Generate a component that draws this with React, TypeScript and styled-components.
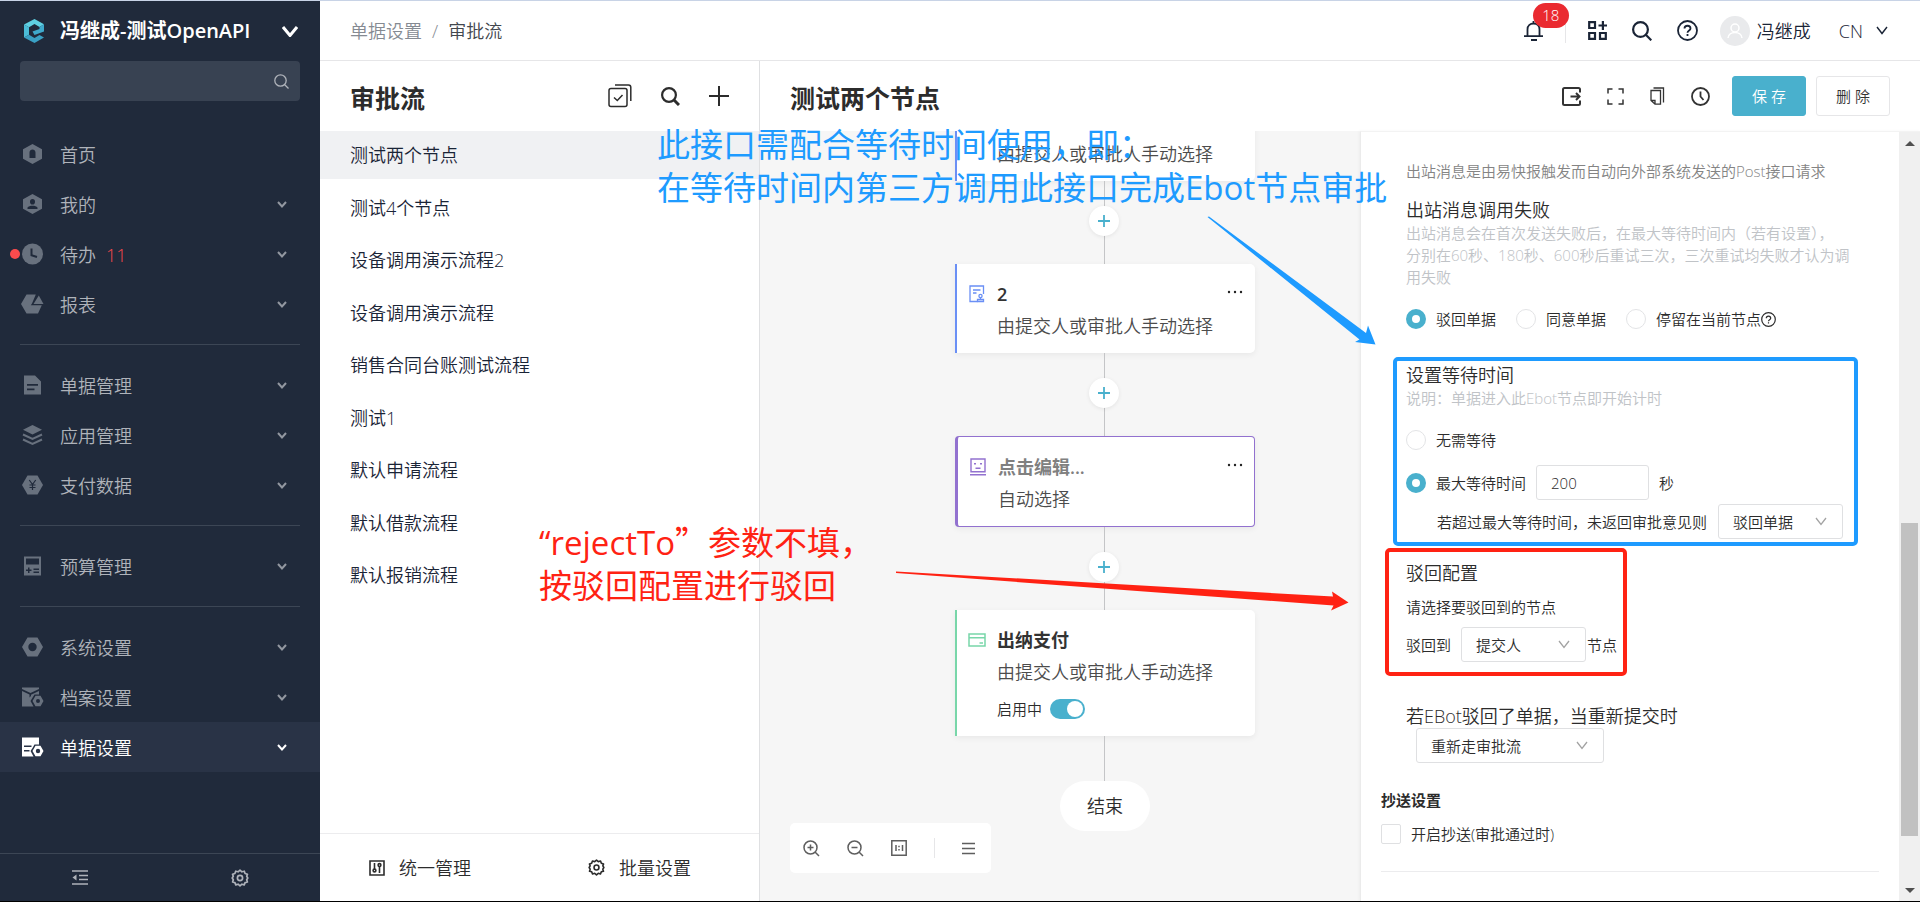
import React from "react";
import styled, { createGlobalStyle, css } from "styled-components";

const Global = createGlobalStyle`
  *, *::before, *::after { box-sizing: border-box; }
  body {
    margin: 0;
    font-family: "Open Sans", "Noto Sans CJK SC", sans-serif;
    font-size: 15px;
    font-weight: 350;
    line-height: 22px;
    color: #2c2c2c;
    background: #fff;
  }
  h1, h2, h3, p, ul { margin: 0; padding: 0; }
  ul { list-style: none; }
  a { color: inherit; text-decoration: none; }
  button, input, select { font: inherit; color: inherit; }
  svg { display: block; flex: none; }
`;

const teal = "#49b0cd";
const ink = "#1a2436";
const line = "#e6e6e8";

/* ---------- shell ---------- */

const Shell = styled.div`
  position: relative;
  display: grid;
  grid-template-columns: 320px minmax(0, 1fr);
  height: 100vh;
  overflow: hidden;
  border-top: 1px solid #c8d3e6;
  border-bottom: 1px solid #000;
`;

const IconButton = styled.button`
  display: flex;
  align-items: center;
  justify-content: center;
  padding: 0;
  border: 0;
  background: none;
  cursor: pointer;
`;

/* ---------- sidebar ---------- */

const Sidebar = styled.aside`
  display: flex;
  flex-direction: column;
  min-height: 0;
  background: #202a3b;
  color: #afb3ba;
`;

const Brand = styled.button`
  display: flex;
  align-items: center;
  height: 60px;
  padding: 0 22px 0 23px;
  border: 0;
  background: none;
  color: #fff;
  font-size: 20px;
  font-weight: 600;
  line-height: 30px;
  text-align: left;
  cursor: pointer;
`;

const BrandName = styled.span`
  flex: 1;
  margin-left: 14px;
  white-space: nowrap;
`;

const SearchBox = styled.label`
  display: flex;
  align-items: center;
  height: 40px;
  margin: 0 20px 28px;
  padding: 0 11px 0 14px;
  border-radius: 4px;
  background: #384252;
`;

const SearchInput = styled.input`
  flex: 1;
  min-width: 0;
  border: 0;
  outline: 0;
  background: none;
`;

const Nav = styled.nav`
  flex: 1;
  min-height: 0;
`;

const NavGroup = styled.ul`
  & + & {
    position: relative;
    padding-top: 31px;
  }
  & + &::before {
    content: "";
    position: absolute;
    top: 15px;
    left: 20px;
    right: 20px;
    height: 1px;
    background: #3c4655;
  }
`;

const NavLink = styled.a<{ $active?: boolean }>`
  position: relative;
  display: flex;
  align-items: center;
  gap: 16px;
  height: 50px;
  padding: 0 33px 0 21px;
  font-size: 18px;
  line-height: 26px;
  background: ${(p) => (p.$active ? "#293346" : "none")};
  color: ${(p) => (p.$active ? "#fff" : "inherit")};
  & > svg:first-of-type { color: ${(p) => (p.$active ? "#fff" : "#68717e")}; }
  & > svg:last-of-type:not(:first-of-type) { opacity: ${(p) => (p.$active ? 1 : 0.8)}; }
`;

const NavLabel = styled.span`
  flex: 1;
  padding-top: 1px;
`;

const NavCount = styled.span`
  margin-left: 10px;
  color: #f5494c;
`;

const NavDot = styled.i`
  position: absolute;
  left: 10px;
  width: 10px;
  height: 10px;
  border-radius: 50%;
  background: #fb4b4d;
`;

const SidebarFoot = styled.div`
  display: grid;
  grid-template-columns: 1fr 1fr;
  height: 48px;
  border-top: 1px solid #3c4655;
`;

/* ---------- top bar ---------- */

const Content = styled.div`
  display: grid;
  grid-template-rows: 60px minmax(0, 1fr);
  min-width: 0;
  min-height: 0;
`;

const TopBar = styled.header`
  display: flex;
  align-items: center;
  justify-content: space-between;
  padding: 0 32px 0 30px;
  border-bottom: 1px solid ${line};
  font-size: 18px;
  line-height: 26px;
`;

const Crumbs = styled.nav`
  display: flex;
  gap: 10px;
  color: #858a92;
`;

const CrumbNow = styled.span`
  color: #42474e;
`;

const TopTools = styled.div`
  display: flex;
  align-items: center;
  color: ${ink};
`;

const BellButton = styled(IconButton)`
  position: relative;
`;

const Badge = styled.span`
  position: absolute;
  left: 9px;
  bottom: 13px;
  width: 36px;
  border-radius: 13px;
  background: #ea2a30;
  color: #fff;
  font-size: 15px;
  line-height: 25px;
  text-align: center;
`;

const Rule = styled.i`
  width: 1px;
  height: 24px;
  background: ${line};
`;

const Tools = styled.div`
  display: flex;
  align-items: center;
  gap: 25px;
  margin: 0 22px;
`;

const Avatar = styled.span`
  display: flex;
  align-items: center;
  justify-content: center;
  width: 30px;
  height: 30px;
  margin-right: 7px;
  border-radius: 50%;
  background: #e9eaec;
`;

const Language = styled(IconButton)`
  gap: 13px;
  margin-left: 28px;
`;

/* ---------- flow list ---------- */

const Body = styled.div`
  display: grid;
  grid-template-columns: 440px minmax(0, 1fr);
  min-height: 0;
`;

const ListPane = styled.section`
  display: flex;
  flex-direction: column;
  min-height: 0;
  border-right: 1px solid #dfe0e2;
`;

const PaneHead = styled.div`
  display: flex;
  align-items: center;
  justify-content: space-between;
  flex: none;
  height: 70px;
  padding: 0 30px;
`;

const PaneTitle = styled.h1`
  margin-top: 3px;
  font-size: 25px;
  font-weight: 700;
  line-height: 36px;
`;

const PaneTools = styled.div`
  display: flex;
  align-items: center;
  gap: 29px;
`;

const FlowList = styled.ul`
  display: flex;
  flex-direction: column;
  justify-content: space-between;
  min-height: 468px;
  font-size: 18px;
  color: ${ink};
`;

const FlowItem = styled.a<{ $active?: boolean }>`
  display: block;
  padding: 0 30px;
  line-height: 48px;
  background: ${(p) => (p.$active ? "#f0f1f3" : "none")};
`;

const ListFoot = styled.div`
  display: flex;
  gap: 117px;
  height: 68px;
  margin-top: auto;
  padding-left: 49px;
  border-top: 1px solid #ececee;
`;

const FootButton = styled(IconButton)`
  gap: 14px;
  font-size: 18px;
`;

/* ---------- editor ---------- */

const Editor = styled.section`
  display: grid;
  grid-template-rows: 70px minmax(0, 1fr);
  min-width: 0;
  min-height: 0;
`;

const EditorTools = styled.div`
  display: flex;
  align-items: center;
  gap: 26px;
  color: #333;
`;

const Actions = styled.div`
  display: flex;
  gap: 10px;
  margin-left: -4px;
`;

const ActionButton = styled.button<{ $primary?: boolean }>`
  width: 74px;
  height: 40px;
  padding: 0;
  border: 1px solid ${(p) => (p.$primary ? teal : line)};
  border-radius: 3px;
  background: ${(p) => (p.$primary ? teal : "#fff")};
  color: ${(p) => (p.$primary ? "#fff" : "#333")};
  cursor: pointer;
`;

const Work = styled.div`
  display: grid;
  grid-template-columns: minmax(0, 1fr) 560px;
  min-height: 0;
`;

const Canvas = styled.div`
  position: relative;
  overflow: hidden;
  padding-left: 195px;
  background: #f6f6f6;
`;

const Flow = styled.div`
  display: flex;
  flex-direction: column;
  align-items: center;
  width: 300px;
  margin-top: -39px;
`;

const Card = styled.article<{ $tone: string; $selected?: boolean }>`
  display: grid;
  grid-template-columns: 18px 1fr 18px;
  column-gap: 11px;
  width: 100%;
  padding: 14px 11px 11px;
  border-left: 2px solid ${(p) => p.$tone};
  border-radius: 0 5px 5px 0;
  background: #fff;
  box-shadow: 0 2px 6px rgba(0, 0, 0, 0.06);
  ${(p) =>
    p.$selected &&
    css`
      padding: 14px 10px 11px 11px;
      border: 1px solid ${p.$tone};
      border-left-width: 3px;
      border-radius: 4px;
    `}
`;

const CardIcon = styled.span<{ $tone: string }>`
  display: flex;
  align-items: center;
  justify-content: center;
  height: 32px;
  color: ${(p) => p.$tone};
`;

const CardTitle = styled.h2<{ $muted?: boolean }>`
  font-size: 18px;
  font-weight: 600;
  line-height: 32px;
  color: ${(p) => (p.$muted ? "#808080" : "#333")};
`;

const CardText = styled.p`
  grid-column: 2 / 4;
  font-size: 18px;
  line-height: 32px;
  color: #4c4c4c;
`;

const MoreButton = styled(IconButton)`
  height: 28px;
  color: #222;
`;

const SwitchRow = styled.label`
  grid-column: 2 / 4;
  display: flex;
  align-items: center;
  gap: 8px;
  height: 42px;
  margin-bottom: -5px;
`;

const Switch = styled.input`
  appearance: none;
  width: 35px;
  height: 20px;
  margin: 0;
  padding: 2px;
  border-radius: 10px;
  background: ${teal};
  &::before {
    content: "";
    display: block;
    width: 16px;
    height: 16px;
    margin-left: 15px;
    border-radius: 50%;
    background: #fff;
  }
`;

const Link = styled.div<{ $short?: boolean }>`
  display: flex;
  flex-direction: column;
  align-items: flex-start;
  width: 32px;
  height: ${(p) => (p.$short ? 45 : 83)}px;
  padding-top: 25px;
  background: linear-gradient(#c4c5c7, #c4c5c7) 15px 0 / 1px 100% no-repeat;
`;

const AddButton = styled(IconButton)`
  width: 30px;
  height: 30px;
  border-radius: 50%;
  background: #fff;
  box-shadow: 0 1px 4px rgba(0, 0, 0, 0.08);
  color: ${teal};
`;

const EndNode = styled.div`
  width: 90px;
  border-radius: 25px;
  background: #fff;
  font-size: 18px;
  line-height: 50px;
  text-align: center;
`;

const ZoomBar = styled.div`
  position: absolute;
  left: 30px;
  bottom: 28px;
  display: flex;
  align-items: center;
  gap: 27px;
  height: 50px;
  padding: 0 16px 0 13px;
  border-radius: 5px;
  background: #fff;
  color: #5e5e5e;
`;

/* ---------- settings panel ---------- */

const Panel = styled.aside`
  display: grid;
  grid-template-columns: minmax(0, 1fr) 21px;
  min-height: 0;
  border-left: 1px solid #ebebeb;
  border-top: 1px solid #f3f3f3;
  box-shadow: -1px 0 3px rgba(0, 0, 0, 0.04);
  position: relative;
  background: #fff;
`;

const Form = styled.form`
  padding: 28px 20px 0;
  overflow: hidden;
`;

const Block = styled.div`
  margin-bottom: 22px;
  padding-left: 25px;
`;

const Heading = styled.h3`
  font-size: 18px;
  font-weight: inherit;
  line-height: 24px;
`;

const Hint = styled.p<{ $dark?: boolean }>`
  color: ${(p) => (p.$dark ? "#848484" : "#c0c3c7")};
`;

const Row = styled.div<{ $gap?: number; $top?: number; $indent?: number }>`
  display: flex;
  align-items: center;
  gap: ${(p) => p.$gap ?? 10}px;
  margin-top: ${(p) => p.$top ?? 0}px;
  padding-left: ${(p) => p.$indent ?? 0}px;
`;

const Choice = styled.label`
  display: flex;
  align-items: center;
  gap: 10px;
  line-height: 20px;
`;

const Radio = styled.input`
  appearance: none;
  flex: none;
  width: 20px;
  height: 20px;
  margin: 0;
  border: 1px solid #e3e4e6;
  border-radius: 50%;
  background: #fff;
  &:checked { border: 6px solid ${teal}; }
`;

const Check = styled.input`
  appearance: none;
  width: 20px;
  height: 20px;
  margin: 0;
  border: 1px solid #dfe0e2;
  border-radius: 2px;
  background: #fff;
`;

const NumberBox = styled.input`
  width: 113px;
  height: 35px;
  padding: 0 14px;
  border: 1px solid #dfe0e2;
  border-radius: 3px;
  outline: 0;
`;

const SelectWrap = styled.span<{ $width: number }>`
  display: grid;
  align-items: center;
  width: ${(p) => p.$width}px;
  & > * { grid-area: 1 / 1; }
  & > svg {
    justify-self: end;
    margin-right: 16px;
    color: #a3a3a3;
    pointer-events: none;
  }
`;

const SelectBox = styled.select`
  appearance: none;
  width: 100%;
  height: 35px;
  padding: 0 14px;
  border: 1px solid #dfe0e2;
  border-radius: 3px;
  background: #fff;
`;

const SubTitle = styled.h3`
  margin: 26px 0 13px;
  font-size: 15px;
  font-weight: 600;
  line-height: 22px;
`;

const Divider = styled.hr`
  height: 1px;
  margin: 27px 0 0;
  border: 0;
  background: #ececee;
`;

const ScrollTrack = styled.div`
  display: grid;
  grid-template-rows: 22px 370fr 313fr 43fr 22px;
  justify-items: center;
  align-items: center;
  background: #f0f0f0;
`;

const ScrollThumb = styled.i`
  grid-row: 3;
  width: 17px;
  height: 100%;
  background: #c1c1c1;
`;

const ScrollArrow = styled.i<{ $down?: boolean }>`
  grid-row: ${(p) => (p.$down ? 5 : 1)};
  border: 5px solid transparent;
  ${(p) =>
    p.$down
      ? "border-top-color: #505050; border-bottom-width: 0;"
      : "border-bottom-color: #505050; border-top-width: 0;"}
`;

/* ---------- annotations ---------- */

const Note = styled.p<{ $x: number; $y: number; $color: string }>`
  position: absolute;
  left: ${(p) => p.$x}px;
  top: ${(p) => p.$y}px;
  color: ${(p) => p.$color};
  font-size: 33px;
  font-weight: 400;
  line-height: 43px;
  white-space: nowrap;
  pointer-events: none;
`;

const WideQuote = styled.span`
  font-family: "Noto Sans CJK SC", sans-serif;
`;

const Frame = styled.div<{ $color: string; $x: number; $y: number; $w: number; $h: number }>`
  position: absolute;
  left: ${(p) => p.$x}px;
  top: ${(p) => p.$y}px;
  width: ${(p) => p.$w}px;
  height: ${(p) => p.$h}px;
  border: 4px solid ${(p) => p.$color};
  border-radius: 5px;
  pointer-events: none;
`;

const Arrows = styled.svg`
  position: absolute;
  left: 0;
  top: -1px;
  pointer-events: none;
`;

/* ---------- icons ---------- */

type IconProps = { w: number; h?: number; children: React.ReactNode; sw?: number; fill?: boolean };

const Icon = ({ w, h = w, children, sw = 1.5, fill }: IconProps) => (
  <svg
    width={w}
    height={h}
    viewBox={`0 0 ${w} ${h}`}
    fill={fill ? "currentColor" : "none"}
    stroke={fill ? "none" : "currentColor"}
    strokeWidth={sw}
    aria-hidden="true"
  >
    {children}
  </svg>
);

const NavIcon = ({ children }: { children: React.ReactNode }) => (
  <Icon w={23} h={22} fill>
    {children}
  </Icon>
);

const Chevron = ({ w = 10, h = 7, sw = 2 }: { w?: number; h?: number; sw?: number }) => (
  <Icon w={w} h={h} sw={sw}>
    <path d={`M1 1L${w / 2} ${h - 1.5}L${w - 1} 1`} />
  </Icon>
);

const GearIcon = ({ size = 18 }: { size?: number }) => (
  <svg width={size} height={size} viewBox="0 0 18 18" fill="none" stroke="currentColor" strokeWidth="1.7" aria-hidden="true">
    <path d="M9 1.2L10.9 2.8L13.3 2.2L14.1 4.5L16.5 5.3L15.7 7.3L16.8 9L15.7 10.8L16.4 12.9L14.1 13.6L13.2 15.9L10.9 15.2L9 16.8L7.1 15.2L4.8 15.9L3.9 13.6L1.6 12.9L2.3 10.8L1.2 9L2.3 7.3L1.5 5.3L3.9 4.5L4.7 2.2L7.1 2.8Z" strokeLinejoin="round" />
    <circle cx="9" cy="9" r="2.6" />
  </svg>
);

const Logo = () => (
  <svg width="23" height="24" viewBox="0 0 23 24" aria-hidden="true">
    <path d="M11.500 0L21 5.300L16.500 8L11.500 5L6 8.200L1 5.500Z" fill="#5fd0e2" />
    <path d="M21 5.300V12.500L11.500 16L9.500 12.500L16.500 10V8Z" fill="#3fa9cc" />
    <path d="M1 5.500L6 8.200V15.800L1 18.500Z" fill="#4bbdd8" />
    <path d="M1 18.500L6 15.800L11.500 19L16.500 16L21 18.500L11.500 24Z" fill="#3aa0c4" />
  </svg>
);

const HexUp = "M11.500 1L21 6.200V15.800L11.500 21L2 15.800V6.200Z";
const HexSide = "M6.500 1.500H16.500L22 11L16.500 20.500H6.500L1 11Z";
const GearHex = "M14.500 9.800H19.500L22.500 15L19.500 20.200H14.500L11.500 15Z";

const navIcons: Record<string, React.ReactNode> = {
  home: <path fillRule="evenodd" d={`${HexUp}M8.500 15V9.500C8.500 5.500 14.500 5.500 14.500 9.500V15Z`} />,
  mine: (
    <path
      fillRule="evenodd"
      d={`${HexUp}M11.500 6A2.500 2.800 0 1 0 11.500 11.600A2.500 2.800 0 1 0 11.500 6ZM6.500 16V14.500C8 12.300 15 12.300 16.500 14.500V16Z`}
    />
  ),
  todo: (
    <>
      <circle cx="11.500" cy="11" r="10.500" />
      <path d="M10.500 5.500V12.200L16 14" fill="none" stroke="#202a3b" strokeWidth="2" />
    </>
  ),
  report: (
    <>
      <path d="M5.500 1.500H14.800L11 10.500L9.800 12.200H20.800L17 20.500H5.500L0 11Z" />
      <path d="M17.800 2.500L22.500 11H12.500Z" />
    </>
  ),
  doc: <path fillRule="evenodd" d="M3 1.500H14L20 7.500V20.500H3ZM6 10V11.700H17V10ZM6 14.500V16.200H13.500V14.500Z" />,
  layers: (
    <>
      <path d="M11.500 1L21 5.800L11.500 10.500L2 5.800Z" />
      <path d="M2 10.500L11.500 15L21 10.500M2 15.500L11.500 20L21 15.500" fill="none" stroke="currentColor" strokeWidth="2" />
    </>
  ),
  pay: (
    <>
      <path d={HexSide} />
      <path d="M8.300 6L11.500 10.500L14.700 6M11.500 10.500V16M8.500 11H14.500M8.500 13.500H14.500" fill="none" stroke="#202a3b" strokeWidth="1.200" />
    </>
  ),
  budget: (
    <path
      fillRule="evenodd"
      d="M3 1.500H20V20.500H3ZM5 3.500V9.500H18V3.500ZM7 12.500V14.500H5V16H7V18H8.500V16H10.500V14.500H8.500V12.500ZM12.500 13.500V15H18V13.500ZM12.500 16.500V18H18V16.500Z"
    />
  ),
  system: <path fillRule="evenodd" d={`${HexSide}M11.500 6.800A4.200 4.200 0 1 0 11.500 15.200A4.200 4.200 0 1 0 11.500 6.800Z`} />,
  archive: (
    <>
      <path d="M1 1.500H18V3L9.500 7L1 3ZM1 5L8.500 8.500V11.500L10 10V8.700L18 5V8.500H13.500L9.500 15L12.500 20.500H1Z" />
      <path fillRule="evenodd" d={`${GearHex}M17 13A2 2 0 1 0 17 17A2 2 0 1 0 17 13Z`} />
    </>
  ),
  form: (
    <>
      <path fillRule="evenodd" d="M1 1.500H18V8.500H13.500L11.500 12L9.500 15L12.500 20.500H1ZM3 9.500V11H10.500V9.500ZM3 14V15.500H8.500V14Z" />
      <path fillRule="evenodd" d={`${GearHex}M17 12.800A2.200 2.200 0 1 0 17 17.200A2.200 2.200 0 1 0 17 12.800Z`} />
    </>
  ),
};

/* ---------- data ---------- */

type NavEntry = { icon: string; label: string; count?: number; leaf?: boolean; active?: boolean };

const navGroups: NavEntry[][] = [
  [
    { icon: "home", label: "首页", leaf: true },
    { icon: "mine", label: "我的" },
    { icon: "todo", label: "待办", count: 11 },
    { icon: "report", label: "报表" },
  ],
  [
    { icon: "doc", label: "单据管理" },
    { icon: "layers", label: "应用管理" },
    { icon: "pay", label: "支付数据" },
  ],
  [{ icon: "budget", label: "预算管理" }],
  [
    { icon: "system", label: "系统设置" },
    { icon: "archive", label: "档案设置" },
    { icon: "form", label: "单据设置", active: true },
  ],
];

const flows = [
  "测试两个节点",
  "测试4个节点",
  "设备调用演示流程2",
  "设备调用演示流程",
  "销售合同台账测试流程",
  "测试1",
  "默认申请流程",
  "默认借款流程",
  "默认报销流程",
];

const blue = "#6a8ff5";
const purple = "#9271cf";
const green = "#78d6a9";

/* ---------- pieces ---------- */

const ApproveIcon = () => (
  <Icon w={16} h={18} sw={1.3}>
    <path d="M8.500 16.500H1V1H14.500V9M4 5H11.500M4 8H7.500" />
    <circle cx="11.500" cy="11" r="1.600" />
    <path d="M11.500 12.500V14M8.500 16.500V14.500H14.500V16.500Z" />
  </Icon>
);

const More = () => (
  <MoreButton type="button" aria-label="更多">
    <Icon w={16} h={4} fill>
      <circle cx="2" cy="2" r="1.200" />
      <circle cx="8" cy="2" r="1.200" />
      <circle cx="14" cy="2" r="1.200" />
    </Icon>
  </MoreButton>
);

const Add = () => (
  <Link>
    <AddButton type="button" aria-label="添加节点">
      <Icon w={12} sw={1.8}>
        <path d="M6 0V12M0 6H12" />
      </Icon>
    </AddButton>
  </Link>
);

const Select = ({ value, width, label }: { value: string; width: number; label: string }) => (
  <SelectWrap $width={width}>
    <SelectBox aria-label={label} defaultValue={value}>
      <option>{value}</option>
    </SelectBox>
    <Chevron w={12} h={9} sw={1.3} />
  </SelectWrap>
);

const Option = ({ name, label, on, children }: { name: string; label: string; on?: boolean; children?: React.ReactNode }) => (
  <Choice>
    <Radio type="radio" name={name} defaultChecked={on} />
    <Row $gap={0}>
      {label}
      {children}
    </Row>
  </Choice>
);

export default function App() {
  return (
    <>
      <Global />
      <Shell>
        <Sidebar>
          <Brand type="button">
            <Logo />
            <BrandName>冯继成-测试OpenAPI</BrandName>
            <Chevron w={16} h={11} sw={3} />
          </Brand>
          <SearchBox>
            <SearchInput aria-label="搜索菜单" />
            <Icon w={15} h={15} sw={1.3}>
              <circle cx="6.500" cy="6.500" r="5.700" />
              <path d="M10.500 10.500L14.500 14.500" />
            </Icon>
          </SearchBox>
          <Nav>
            {navGroups.map((group, i) => (
              <NavGroup key={i}>
                {group.map((item) => (
                  <li key={item.label}>
                    <NavLink href="#" $active={item.active}>
                      {item.count && <NavDot />}
                      <NavIcon>{navIcons[item.icon]}</NavIcon>
                      <NavLabel>
                        {item.label}
                        {item.count && <NavCount>{item.count}</NavCount>}
                      </NavLabel>
                      {!item.leaf && <Chevron />}
                    </NavLink>
                  </li>
                ))}
              </NavGroup>
            ))}
          </Nav>
          <SidebarFoot>
            <IconButton type="button" aria-label="收起菜单">
              <Icon w={16} h={15} sw={1.5}>
                <path d="M0 1H16M7 5.500H16M7 9.500H16M0 14H16" />
                <path d="M4.500 4.500V10.500L0.500 7.500Z" fill="currentColor" stroke="none" />
              </Icon>
            </IconButton>
            <IconButton type="button" aria-label="设置">
              <GearIcon />
            </IconButton>
          </SidebarFoot>
        </Sidebar>

        <Content>
          <TopBar>
            <Crumbs aria-label="位置">
              <a href="#">单据设置</a>
              <span>/</span>
              <CrumbNow>审批流</CrumbNow>
            </Crumbs>
            <TopTools>
              <BellButton type="button" aria-label="通知">
                <Icon w={19} h={20} sw={1.8}>
                  <path d="M3.500 15V8.500C3.500 0.500 15.500 0.500 15.500 8.500V15M0 15.200H19M7 19H13M9.500 0V3" />
                </Icon>
                <Badge>18</Badge>
              </BellButton>
              <Rule style={{ marginLeft: 22 }} />
              <Tools>
                <IconButton type="button" aria-label="应用">
                  <Icon w={19} sw={2.2}>
                    <path d="M1.200 1.200H7V7H1.200ZM1.200 12H7V17.800H1.200ZM12 12H17.800V17.800H12ZM14.900 0V9M10.500 4.500H19" />
                  </Icon>
                </IconButton>
                <IconButton type="button" aria-label="搜索">
                  <Icon w={20} sw={2.2}>
                    <circle cx="8.500" cy="8.500" r="7.400" />
                    <path d="M13.800 13.800L19.300 19.300" />
                  </Icon>
                </IconButton>
                <IconButton type="button" aria-label="帮助">
                  <Icon w={21} sw={1.8}>
                    <circle cx="10.500" cy="10.500" r="9.500" />
                    <path d="M7.500 8.500C7.500 4.800 13.500 4.800 13.500 8.500C13.500 10.500 10.500 10.500 10.500 12.800M10.500 14V16" />
                  </Icon>
                </IconButton>
              </Tools>
              <Avatar>
                <svg width="16" height="16" viewBox="0 0 16 16" fill="none" stroke="#fff" strokeWidth="1.5" aria-hidden="true">
                  <circle cx="8" cy="5" r="4" />
                  <path d="M1 15C1.500 7.500 14.500 7.500 15 15" />
                </svg>
              </Avatar>
              <span>冯继成</span>
              <Language type="button">
                CN
                <Chevron w={12} h={9} sw={1.4} />
              </Language>
            </TopTools>
          </TopBar>

          <Body>
            <ListPane>
              <PaneHead>
                <PaneTitle>审批流</PaneTitle>
                <PaneTools>
                  <IconButton type="button" aria-label="批量选择">
                    <Icon w={24} sw={1.5}>
                      <rect x="1" y="4.500" width="18" height="18" rx="2" />
                      <path d="M6 13.500L9.300 16.500L14.500 11M7 1H20.500C22 1 22.800 1.800 22.800 3.300V17" />
                    </Icon>
                  </IconButton>
                  <IconButton type="button" aria-label="搜索审批流">
                    <Icon w={19} sw={2.2}>
                      <circle cx="8" cy="8" r="6.900" />
                      <path d="M12.500 12.500L18 18" strokeWidth="3" />
                    </Icon>
                  </IconButton>
                  <IconButton type="button" aria-label="新建审批流">
                    <Icon w={20} sw={2}>
                      <path d="M10 0V20M0 10H20" />
                    </Icon>
                  </IconButton>
                </PaneTools>
              </PaneHead>
              <FlowList>
                {flows.map((name, i) => (
                  <li key={name}>
                    <FlowItem href="#" $active={i === 0}>
                      {name}
                    </FlowItem>
                  </li>
                ))}
              </FlowList>
              <ListFoot>
                <FootButton type="button">
                  <Icon w={16} sw={1.6}>
                    <path d="M1 1H15V15H1ZM5.500 3V9M10.500 6.500V13" />
                    <circle cx="5.500" cy="10.500" r="1.400" />
                    <circle cx="10.500" cy="5" r="1.400" />
                  </Icon>
                  统一管理
                </FootButton>
                <FootButton type="button">
                  <GearIcon size={17} />
                  批量设置
                </FootButton>
              </ListFoot>
            </ListPane>

            <Editor>
              <PaneHead>
                <PaneTitle>测试两个节点</PaneTitle>
                <EditorTools>
                  <IconButton type="button" aria-label="导出">
                    <Icon w={19} sw={2}>
                      <path d="M18 5.500V2.500C18 1.500 17.500 1 16.500 1H2.500C1.500 1 1 1.500 1 2.500V16.500C1 17.500 1.500 18 2.500 18H16.500C17.500 18 18 17.500 18 16.500V13.500M8.500 9.500H17.500M14 6L17.500 9.500L14 13" />
                    </Icon>
                  </IconButton>
                  <IconButton type="button" aria-label="全屏">
                    <Icon w={17} sw={1.5}>
                      <path d="M1 5.500V1H5.500M11.500 1H16V5.500M16 11.500V16H11.500M5.500 16H1V11.500" />
                    </Icon>
                  </IconButton>
                  <IconButton type="button" aria-label="复制">
                    <Icon w={15} h={18} sw={1.3}>
                      <path d="M1 3.500H10.500V17.200H5L1 13.500ZM1 13.500H5V17.200M3.500 1H13.500V15.500" />
                    </Icon>
                  </IconButton>
                  <IconButton type="button" aria-label="历史">
                    <Icon w={19} sw={1.8}>
                      <circle cx="9.500" cy="9.500" r="8.500" />
                      <path d="M9.500 4.500V9.500L12.500 13" />
                    </Icon>
                  </IconButton>
                  <Actions>
                    <ActionButton type="button" $primary>
                      保 存
                    </ActionButton>
                    <ActionButton type="button">删 除</ActionButton>
                  </Actions>
                </EditorTools>
              </PaneHead>

              <Work>
                <Canvas>
                  <Flow>
                    <Card $tone={blue}>
                      <CardIcon $tone={blue}>
                        <ApproveIcon />
                      </CardIcon>
                      <CardTitle />
                      <More />
                      <CardText>由提交人或审批人手动选择</CardText>
                    </Card>
                    <Add />
                    <Card $tone={blue}>
                      <CardIcon $tone={blue}>
                        <ApproveIcon />
                      </CardIcon>
                      <CardTitle>2</CardTitle>
                      <More />
                      <CardText>由提交人或审批人手动选择</CardText>
                    </Card>
                    <Add />
                    <Card $tone={purple} $selected>
                      <CardIcon $tone={purple}>
                        <Icon w={16} h={18} sw={1.4}>
                          <path d="M1 1H15V13.800H1ZM0 16.800H16M5.500 10.200H10.500M4 5.800H6M10 5.800H12" />
                        </Icon>
                      </CardIcon>
                      <CardTitle $muted>点击编辑...</CardTitle>
                      <More />
                      <CardText>自动选择</CardText>
                    </Card>
                    <Add />
                    <Card $tone={green}>
                      <CardIcon $tone={green}>
                        <Icon w={18} h={14} sw={1.5}>
                          <path d="M1 1H17V13H1ZM1 4.800H17M11.500 10H15" />
                        </Icon>
                      </CardIcon>
                      <CardTitle>出纳支付</CardTitle>
                      <span />
                      <CardText>由提交人或审批人手动选择</CardText>
                      <SwitchRow>
                        启用中
                        <Switch type="checkbox" role="switch" defaultChecked />
                      </SwitchRow>
                    </Card>
                    <Link $short />
                    <EndNode>结束</EndNode>
                  </Flow>

                  <ZoomBar>
                    <IconButton type="button" aria-label="放大">
                      <Icon w={17} sw={1.5}>
                        <circle cx="7.500" cy="7.500" r="6.500" />
                        <path d="M12 12L16 16M4.500 7.500H10.500M7.500 4.500V10.500" />
                      </Icon>
                    </IconButton>
                    <IconButton type="button" aria-label="缩小">
                      <Icon w={17} sw={1.5}>
                        <circle cx="7.500" cy="7.500" r="6.500" />
                        <path d="M12 12L16 16M4.500 7.500H10.500" />
                      </Icon>
                    </IconButton>
                    <IconButton type="button" aria-label="原始大小">
                      <Icon w={16} sw={1.5}>
                        <path d="M0.800 0.800H15.200V15.200H0.800ZM5 5V11M11.500 5V11M8 5.800V7.200M8 9V10.400" />
                      </Icon>
                    </IconButton>
                    <Rule style={{ height: 20 }} />
                    <IconButton type="button" aria-label="列表">
                      <Icon w={13} sw={1.6}>
                        <path d="M0 1.500H13M0 6.500H13M0 11.500H13" />
                      </Icon>
                    </IconButton>
                  </ZoomBar>
                </Canvas>

                <Panel>
                  <Form>
                    <Block>
                      <Hint $dark>出站消息是由易快报触发而自动向外部系统发送的Post接口请求</Hint>
                      <Row $top={16}>
                        <Heading>出站消息调用失败</Heading>
                      </Row>
                      <Hint>
                        出站消息会在首次发送失败后，在最大等待时间内（若有设置），
                        <br />
                        分别在60秒、180秒、600秒后重试三次，三次重试均失败才认为调
                        <br />
                        用失败
                      </Hint>
                      <Row $gap={20} $top={21}>
                        <Option name="fail" label="驳回单据" on />
                        <Option name="fail" label="同意单据" />
                        <Option name="fail" label="停留在当前节点">
                          <Icon w={15} sw={1.2}>
                            <circle cx="7.500" cy="7.500" r="6.800" />
                            <path d="M5.300 6.200C5.300 3.300 9.700 3.300 9.700 6.200C9.700 7.700 7.500 7.700 7.500 9.200M7.500 10.300V11.500" />
                          </Icon>
                        </Option>
                      </Row>
                    </Block>

                    <Block>
                      <Row $top={34}>
                        <Heading>设置等待时间</Heading>
                      </Row>
                      <Hint>说明：单据进入此Ebot节点即开始计时</Hint>
                      <Row $top={21}>
                        <Option name="wait" label="无需等待" />
                      </Row>
                      <Row $top={15}>
                        <Option name="wait" label="最大等待时间" on />
                        <NumberBox aria-label="最大等待时间（秒）" defaultValue="200" />
                        秒
                      </Row>
                      <Row $top={4} $indent={31} $gap={11}>
                        若超过最大等待时间，未返回审批意见则
                        <Select label="超时处理" value="驳回单据" width={125} />
                      </Row>
                    </Block>

                    <Block>
                      <Heading>驳回配置</Heading>
                      <Row $top={11}>请选择要驳回到的节点</Row>
                      <Row $top={9}>
                        驳回到
                        <Row $gap={1}>
                          <Select label="驳回到" value="提交人" width={125} />
                          节点
                        </Row>
                      </Row>
                    </Block>

                    <Block>
                      <Row $top={42}>
                        <Heading>若EBot驳回了单据，当重新提交时</Heading>
                      </Row>
                      <Row $indent={10}>
                        <Select label="重新提交时" value="重新走审批流" width={188} />
                      </Row>
                    </Block>

                    <SubTitle>抄送设置</SubTitle>
                    <Choice>
                      <Check type="checkbox" />
                      开启抄送(审批通过时)
                    </Choice>
                    <Divider />
                  </Form>
                  <ScrollTrack aria-hidden="true">
                    <ScrollArrow />
                    <ScrollThumb />
                    <ScrollArrow $down />
                  </ScrollTrack>
                </Panel>
              </Work>
            </Editor>
          </Body>
        </Content>

        <Note $x={657} $y={122} $color="#1e9bff">
          此接口需配合等待时间使用，即：
          <br />
          在等待时间内第三方调用此接口完成Ebot节点审批
        </Note>
        <Note $x={539} $y={519} $color="#ff2213">
          “rejectTo<WideQuote>”</WideQuote>参数不填，
          <br />
          按驳回配置进行驳回
        </Note>
        <Frame $color="#1e9bff" $x={1393} $y={356} $w={465} $h={189} />
        <Frame $color="#ff2213" $x={1385} $y={547} $w={242} $h={128} />
        <Arrows width="1400" height="640" viewBox="0 0 1400 640" aria-hidden="true">
          <path d="M1207.500 217L1209 216.500L1366 333L1368 325.500L1375.500 344.500L1355 342L1359.500 339.500Z" fill="#1e9bff" />
          <path d="M896 571.500L1333 596.500L1332 591.500L1348.500 602.500L1331 610.500L1333.500 605.500L896 573Z" fill="#ff2213" />
        </Arrows>
      </Shell>
    </>
  );
}
